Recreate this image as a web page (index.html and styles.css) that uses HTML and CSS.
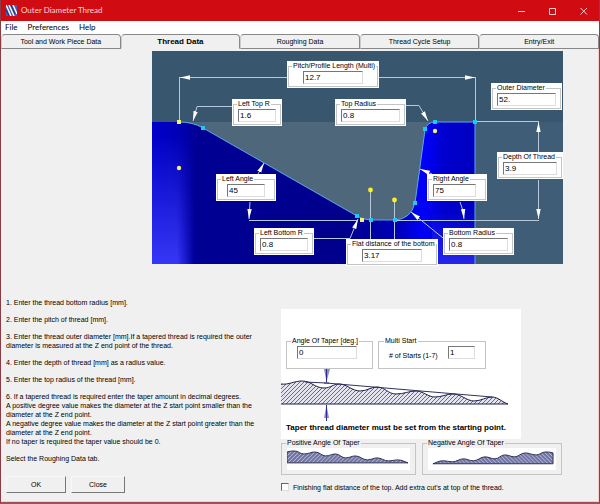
FILE: index.html
```html
<!DOCTYPE html>
<html lang="en">

<head>
    <meta charset="UTF-8">
    <meta name="viewport" content="width=device-width, initial-scale=1.0">
    <title>Outer Diameter Thread</title>
    <link rel="stylesheet" href="styles.css">
</head>

<body>

    <div class="window">
        <header class="title-bar">
            <svg class="app-icon" width="11" height="11" viewBox="0 0 11 11">
                <rect width="11" height="11" fill="#4a5cb4"/>
                <path d="M0 0L5 11M3 0L8 11M7 0L11 9" stroke="#fff" stroke-width="1.4"/>
                <path d="M0 4L3 11M5 0L9 9" stroke="#1c2c80" stroke-width="1"/>
            </svg>
            <h1>Outer Diameter Thread</h1>
            <div class="window-controls">
                <button type="button" aria-label="Minimize"><svg width="8" height="8" viewBox="0 0 8 8"><path d="M0 4.500H7"/></svg></button>
                <button type="button" aria-label="Maximize"><svg width="8" height="8" viewBox="0 0 8 8"><path d="M.5 1.500H6.500V7.500H.5Z"/></svg></button>
                <button type="button" aria-label="Close window"><svg width="8" height="8" viewBox="0 0 8 8"><path d="M.5 1L7 7.500M7 1L.5 7.500"/></svg></button>
            </div>
        </header>

        <nav class="menu-bar">
            <button type="button">File</button>
            <button type="button">Preferences</button>
            <button type="button">Help</button>
        </nav>

        <div class="tabs" role="tablist">
            <button type="button" role="tab">Tool and Work Piece Data</button>
            <button type="button" role="tab" class="active" aria-selected="true">Thread Data</button>
            <button type="button" role="tab">Roughing Data</button>
            <button type="button" role="tab">Thread Cycle Setup</button>
            <button type="button" role="tab">Entry/Exit</button>
        </div>

        <main>
            <div class="diagram">
                <svg class="diagram-drawing" viewBox="0 0 411 213">
                    <defs>
                        <linearGradient id="blueLeft">
                            <stop offset="0" stop-color="#0000cc"/>
                            <stop offset="0.08" stop-color="#0000b8"/>
                            <stop offset="0.14" stop-color="#000094"/>
                            <stop offset="0.6" stop-color="#00008c"/>
                            <stop offset="0.76" stop-color="#0000b8"/>
                            <stop offset="0.84" stop-color="#0000ff"/>
                            <stop offset="0.9" stop-color="#0000d0"/>
                            <stop offset="1" stop-color="#0000c0"/>
                        </linearGradient>
                        <linearGradient id="glow" x1="0" y1="0" x2="0" y2="1">
                            <stop offset="0.1" stop-color="#4040ff" stop-opacity="0"/>
                            <stop offset="1" stop-color="#4040ff" stop-opacity="0.85"/>
                        </linearGradient>
                        <linearGradient id="fadeRight">
                            <stop offset="0.6" stop-color="#fff"/>
                            <stop offset="1" stop-color="#000"/>
                        </linearGradient>
                        <mask id="leftMask"><rect y="71" width="42" height="142" fill="url(#fadeRight)"/></mask>
                        <marker id="arrow" viewBox="0 0 10 6" refX="10" refY="3" markerWidth="10" markerHeight="6" markerUnits="userSpaceOnUse" orient="auto-start-reverse">
                            <path d="M0 .8L10 3L0 5.200Z" fill="#fff"/>
                        </marker>
                    </defs>

                    <!-- background and the empty groove -->
                    <rect width="411" height="213" fill="#39566f"/>
                    <rect x="323" y="71" width="88" height="142" fill="#3f5d76"/>
                    <rect x="27" y="71" width="260" height="100" fill="#4f677b"/>

                    <!-- solid thread profile -->
                    <path d="M0 71H27Q41 71 51 77L205 165Q212 169 219 169H243Q259 168 263 152L273 79Q275 71 283 71H323V213H0Z" fill="url(#blueLeft)"/>
                    <rect y="71" width="42" height="142" fill="url(#glow)" mask="url(#leftMask)"/>
                    <rect x="280" y="155" width="43" height="58" fill="url(#glow)" opacity="0.7"/>
                    <path d="M27 71Q41 71 51 77L205 165Q212 169 219 169H243Q259 168 263 152L273 79Q275 71 283 71H323V213" fill="none" stroke="#58a8f0"/>

                    <!-- dimension lines -->
                    <g fill="none" stroke="#b8c8dc">
                        <path d="M27.500 70V26"/>
                        <path d="M135 26.500H28" marker-end="url(#arrow)"/>
                        <path d="M227 26.500H323" marker-end="url(#arrow)"/>
                        <path d="M323.500 26V70.500H387"/>
                        <path d="M80 55.500H45L41 70" marker-end="url(#arrow)"/>
                        <path d="M254 54.500H267L276 70" marker-end="url(#arrow)"/>
                        <path d="M386.500 101V71" marker-end="url(#arrow)"/>
                        <path d="M386.500 129V168" marker-end="url(#arrow)"/>
                        <path d="M97 169.500H205M245 169.500H387"/>
                        <path d="M106 123L112 112" marker-end="url(#arrow)"/>
                        <path d="M98 151L97 168" marker-end="url(#arrow)"/>
                        <path d="M280 123L268 118" marker-end="url(#arrow)"/>
                        <path d="M308 151Q311 157 312 168" marker-end="url(#arrow)"/>
                        <path d="M162 187.500H198L206 168" marker-end="url(#arrow)"/>
                        <path d="M291 187L259 161" marker-end="url(#arrow)"/>
                        <path d="M218.500 139V189M242.500 149V189"/>
                    </g>

                    <!-- profile points and arc centers -->
                    <g fill="#20c8f0">
                        <path d="M49 75h4v4h-4zM203 163h4v4h-4zM217 167h4v4h-4zM241 167h4v4h-4zM261 150h4v4h-4zM271 76h4v4h-4zM281 69h4v4h-4zM321 69h4v4h-4z"/>
                    </g>
                    <g fill="#f4f070">
                        <path d="M25 69h4v4h-4zM208 167h4v4h-4z"/>
                        <circle cx="27" cy="117" r="2.200"/>
                        <circle cx="283" cy="80" r="2.200"/>
                        <circle cx="218.500" cy="139" r="2.400" fill="#fff020"/>
                        <circle cx="242.500" cy="149" r="2.400" fill="#fff020"/>
                    </g>
                </svg>

                <div class="callout pitch">
                    <fieldset>
                        <legend><label for="pitch">Pitch/Profile Length (Multi)</label></legend>
                        <input type="text" id="pitch" value="12.7">
                    </fieldset>
                </div>
                <div class="callout left-top">
                    <fieldset>
                        <legend><label for="leftTop">Left Top R</label></legend>
                        <input type="text" id="leftTop" value="1.6">
                    </fieldset>
                </div>
                <div class="callout top-radius">
                    <fieldset>
                        <legend><label for="topRadius">Top Radius</label></legend>
                        <input type="text" id="topRadius" value="0.8">
                    </fieldset>
                </div>
                <div class="callout outer-diameter">
                    <fieldset>
                        <legend><label for="outerDiameter">Outer Diameter</label></legend>
                        <input type="text" id="outerDiameter" value="52.">
                    </fieldset>
                </div>
                <div class="callout depth">
                    <fieldset>
                        <legend><label for="depth">Depth Of Thread</label></legend>
                        <input type="text" id="depth" value="3.9">
                    </fieldset>
                </div>
                <div class="callout left-angle">
                    <fieldset>
                        <legend><label for="leftAngle">Left Angle</label></legend>
                        <input type="text" id="leftAngle" value="45">
                    </fieldset>
                </div>
                <div class="callout right-angle">
                    <fieldset>
                        <legend><label for="rightAngle">Right Angle</label></legend>
                        <input type="text" id="rightAngle" value="75">
                    </fieldset>
                </div>
                <div class="callout left-bottom">
                    <fieldset>
                        <legend><label for="leftBottom">Left Bottom R</label></legend>
                        <input type="text" id="leftBottom" value="0.8">
                    </fieldset>
                </div>
                <div class="callout bottom-radius">
                    <fieldset>
                        <legend><label for="bottomRadius">Bottom Radius</label></legend>
                        <input type="text" id="bottomRadius" value="0.8">
                    </fieldset>
                </div>
                <div class="callout flat">
                    <fieldset>
                        <legend><label for="flat">Flat distance of the bottom</label></legend>
                        <input type="text" id="flat" value="3.17">
                    </fieldset>
                </div>
            </div>

            <div class="lower">
                <section class="instructions">
                    <p>1. Enter the thread bottom radius [mm].</p>
                    <p>2. Enter the pitch of thread [mm].</p>
                    <p>3. Enter the thread outer diameter [mm].If a tapered thread is required the outer<br>diameter is measured at the Z end point of the thread.</p>
                    <p>4. Enter the depth of thread [mm] as a radius value.</p>
                    <p>5. Enter the top radius of the thread [mm].</p>
                    <p>6. If a tapered thread is required enter the taper amount in decimal degrees.<br>A positive degree value makes the diameter at the Z start point smaller than the<br>diameter at the Z end point.<br>A negative degree value makes the diameter at the Z start point greater than the<br>diameter at the Z end point.<br>If no taper is required the taper value should be 0.</p>
                    <p>Select the Roughing Data tab.</p>
                    <div class="actions">
                        <button type="button" class="btn">OK</button>
                        <button type="button" class="btn">Close</button>
                    </div>
                </section>

                <section class="taper">
                    <div class="taper-panel">
                        <div class="taper-fields">
                            <fieldset class="taper-angle">
                                <legend><label for="taperAngle">Angle Of Taper [deg.]</label></legend>
                                <input type="text" id="taperAngle" value="0">
                            </fieldset>
                            <fieldset class="multi-start">
                                <legend>Multi Start</legend>
                                <label for="starts"># of Starts (1-7)</label>
                                <input type="text" id="starts" value="1">
                            </fieldset>
                        </div>
                        <svg class="taper-drawing" viewBox="0 0 240 54">
                            <defs>
                                <pattern id="hatch" width="4" height="4" patternUnits="userSpaceOnUse">
                                    <rect width="4" height="4" fill="#e4e4ee"/>
                                    <path d="M-1 5L5 -1M-1 1L1 -1M3 5L5 3" stroke="#48486c" stroke-width="0.8"/>
                                </pattern>
                                <pattern id="hatchSmall" width="4" height="4" patternUnits="userSpaceOnUse">
                                    <rect width="4" height="4" fill="#7074a4"/>
                                    <path d="M-1 5L5 -1M-1 1L1 -1M3 5L5 3" stroke="#c8cce4" stroke-width="0.9"/>
                                </pattern>
                            </defs>
                            <path d="M0 15C8 16 13 12 21 12C30 12 34 19 43 19C50 19 52 15 58 15C66 15 71 22 79 22C86 22 90 18 96 18C104 18 107 25 115 25C123 25 128 22 135 22C142 22 147 28 154 28C161 28 165 25 172 25C180 25 186 32 193 32C200 32 205 28 211 28C217 28 221 33 227 35H0" fill="url(#hatch)" stroke="#202048"/>
                            <path d="M24 13L45 14L211 28" fill="none" stroke="#303060"/>
                            <path d="M43 0L45.500 13L49 0ZM45.500 36L43 49H48Z" fill="#8c8cc4"/>
                            <path d="M45.500 0V13M45.500 36V52M43 14H48" stroke="#2c2c90"/>
                        </svg>
                        <p class="taper-note">Taper thread diameter must be set from the starting point.</p>
                    </div>

                    <div class="taper-examples">
                        <fieldset>
                            <legend>Positive Angle Of Taper</legend>
                            <svg viewBox="0 0 124 22">
                                <path id="slope" d="M0 4Q3 3 7 3C12 3 13 6 17 6C22 6 24 4 28 4C33 4 35 8 39 8C43 8 45 6 49 6C53 6 55 10 59 10C63 10 65 8 69 8C74 8 76 12 81 12C85 12 87 10 91 10C95 10 98 13 102 13C106 13 108 12 112 12C116 12 119 14 122 15H0Z" fill="url(#hatchSmall)" stroke="#303050"/>
                            </svg>
                        </fieldset>
                        <fieldset>
                            <legend>Negative Angle Of Taper</legend>
                            <svg viewBox="0 0 130 22">
                                <use href="#slope" transform="translate(127 1) scale(-1 1)"/>
                            </svg>
                        </fieldset>
                    </div>

                    <label class="check-row"><input type="checkbox"> Finishing flat distance of the top. Add extra cut's at top of the thread.</label>
                </section>
            </div>
        </main>
    </div>

</body>

</html>
```

FILE: styles.css
```css
* {
    box-sizing: border-box;
}

body {
    margin: 0;
    background-color: #f0f0f0;
    color: #000;
    font-family: "Liberation Sans", Arial, sans-serif;
    font-size: 7px;
    line-height: 9px;
}

button,
input {
    font: inherit;
    color: inherit;
}

.window {
    display: flex;
    flex-direction: column;
    min-height: 100vh;
    border: 1px solid #8c3c44;
    border-top: 0;
    border-bottom: 2px solid #a05058;
    box-shadow: inset -1px -1px #f4d0d0;
}

/* title bar */

.title-bar {
    display: flex;
    align-items: center;
    height: 21px;
    padding-left: 5px;
    background-color: #d00c12;
    color: #fbd8d8;
}

.title-bar h1 {
    flex: 1;
    margin: 0 0 0 4px;
    font-family: Lato, sans-serif;
    font-size: 8px;
    font-weight: normal;
}

.window-controls {
    display: flex;
}

.window-controls button {
    display: flex;
    align-items: center;
    justify-content: center;
    width: 31px;
    height: 21px;
    padding: 0;
    border: 0;
    background: none;
}

.window-controls path {
    fill: none;
    stroke: #fbd0d0;
}

/* menu */

.menu-bar {
    display: flex;
    gap: 10px;
    height: 13px;
    padding-left: 4px;
    background-color: #fff;
}

.menu-bar button {
    padding: 0;
    border: 0;
    background: none;
    font-family: Lato, sans-serif;
    font-size: 8px;
}

/* tabs */

.tabs {
    display: flex;
    height: 15px;
    background-color: #fff;
}

.tabs button {
    flex: 1;
    padding: 0;
    border: 1px solid #888;
    border-left-color: #ccc;
    border-radius: 4px 4px 0 0;
    background-color: #f0f0f0;
}

.tabs .active {
    border-bottom-color: #f0f0f0;
    font-size: 8px;
    font-weight: bold;
}

/* fields */

fieldset {
    min-width: 0;
    margin: 0;
    border: 1px solid #c4c4c4;
}

legend {
    padding: 0 1px;
    line-height: 8px;
    white-space: nowrap;
}

input[type="text"] {
    display: block;
    height: 13px;
    padding: 0 1px;
    border: 1px solid #ddd;
    border-top-color: #777;
    border-left-color: #777;
    border-radius: 0;
    background-color: #fff;
    font-size: 8px;
}

/* thread diagram */

.diagram {
    position: relative;
    width: 411px;
    margin: 2px 36px 0 auto;
}

.diagram-drawing {
    display: block;
    width: 100%;
}

.callout {
    position: absolute;
    width: 60px;
    padding: 1px;
    background-color: #fff;
}

.callout fieldset {
    padding: 1px 4px 2px;
}

.callout legend {
    margin-left: -1px;
}

.callout input {
    width: 100%;
}

.pitch {
    left: 135px;
    top: 10px;
    width: 92px;
}

.pitch input {
    width: 60px;
    margin-left: 10px;
}

.left-top {
    left: 80px;
    top: 48px;
    width: 50px;
}

.top-radius {
    left: 183px;
    top: 48px;
    width: 71px;
}

.outer-diameter {
    left: 339px;
    top: 32px;
    width: 71px;
}

.depth {
    left: 345px;
    top: 101px;
    width: 66px;
}

.left-angle {
    left: 64px;
    top: 123px;
}

.left-angle input {
    width: 38px;
    margin-left: 5px;
}

.right-angle {
    left: 275px;
    top: 123px;
}

.right-angle input {
    width: 43px;
}

.left-bottom {
    left: 102px;
    top: 177px;
}

.bottom-radius {
    left: 291px;
    top: 177px;
    width: 71px;
}

.flat {
    left: 194px;
    top: 188px;
    width: 92px;
}

.flat input {
    width: 60px;
    margin-left: 10px;
}

/* lower part */

.lower {
    display: flex;
    padding: 34px 37px 6px 5px;
}

.instructions {
    flex: 1;
    min-width: 0;
}

.instructions p {
    margin: 0 0 8px;
    white-space: nowrap;
}

.actions {
    display: flex;
    gap: 5px;
    margin-top: 13px;
}

.btn {
    width: 60px;
    height: 17px;
    padding: 0;
    border: 1px solid #f8f8f8;
    border-right-color: #777;
    border-bottom-color: #777;
    background-color: #f0f0f0;
}

.btn + .btn {
    width: 54px;
}

.taper {
    flex: none;
    width: 281px;
    margin-top: 11px;
}

.taper-panel {
    width: 240px;
    padding-top: 28px;
    background-color: #fff;
}

.taper-fields {
    display: flex;
    gap: 5px;
    padding: 0 5px;
}

.taper-angle {
    width: 87px;
    padding: 1px 10px 8px;
}

.taper-angle legend {
    margin-left: -6px;
}

.taper-angle input {
    width: 60px;
}

.multi-start {
    display: flex;
    justify-content: space-between;
    width: 108px;
    padding: 1px 10px 8px;
}

.multi-start label {
    padding-top: 5px;
}

.multi-start legend {
    margin-left: -5px;
}

.multi-start input {
    width: 27px;
}

.taper-drawing {
    display: block;
    width: 100%;
}

.taper-note {
    margin: 0;
    padding: 0 5px 7px;
    font-size: 8px;
    font-weight: bold;
    white-space: nowrap;
}

.taper-examples {
    display: grid;
    grid-template-columns: 135px 1fr;
    gap: 6px;
}

.taper-examples fieldset {
    padding: 1px 5px 4px;
}

.taper-examples legend {
    margin-left: -1px;
}

.taper-examples svg {
    display: block;
    width: 100%;
    background-color: #fff;
}

.check-row {
    display: flex;
    align-items: center;
    gap: 4px;
    margin-top: 8px;
    white-space: nowrap;
}

.check-row input {
    appearance: none;
    width: 8px;
    height: 8px;
    margin: 0;
    border: 1px solid #ddd;
    border-top-color: #666;
    border-left-color: #666;
    background-color: #fff;
}

.check-row input:checked {
    background-color: #333;
}
```
